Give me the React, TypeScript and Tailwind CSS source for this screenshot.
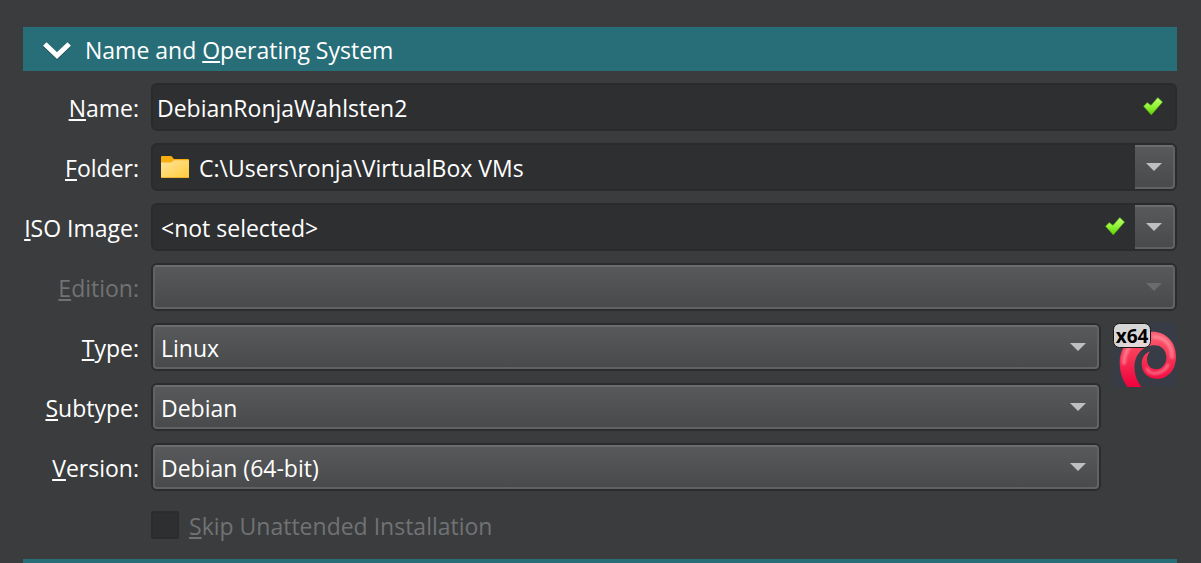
import { useId, type ReactNode } from 'react';

const rowGrid = 'grid grid-cols-[116px_minmax(0,1fr)] gap-x-3 items-center';
const raised =
  'rounded-sm border-2 border-[#616264] border-t-[#6b6c6e] bg-linear-to-b from-[#58595b] to-[#484a4b]';

function Mnemonic({ children }: { children: ReactNode }) {
  return <span className="underline decoration-2 underline-offset-2 [text-decoration-skip-ink:none]">{children}</span>;
}

function Label({ htmlFor, text, disabled }: { htmlFor: string; text: string; disabled?: boolean }) {
  return (
    <label
      htmlFor={htmlFor}
      className={'justify-self-end pt-0.5 whitespace-nowrap ' + (disabled ? 'text-[#717274]' : 'text-white')}
    >
      <Mnemonic>{text[0]}</Mnemonic>
      {text.slice(1)}
    </label>
  );
}

function Arrow({ dim }: { dim?: boolean }) {
  return (
    <svg viewBox="0 0 16 8" className="h-2 w-4" aria-hidden="true">
      <path d="M0 0H16L8 8Z" fill={dim ? '#6a6b6b' : '#bfbfbf'} />
    </svg>
  );
}

function Check() {
  const id = useId();
  return (
    <svg viewBox="0 0 20 20" className="size-5" aria-hidden="true">
      <defs>
        <linearGradient id={id} x1="0" y1="0" x2="0" y2="1">
          <stop offset="0" stopColor="#c0ff70" />
          <stop offset="0.5" stopColor="#92f43a" />
          <stop offset="1" stopColor="#5fd000" />
        </linearGradient>
      </defs>
      <path
        d="M0.5 9.300 4.200 5.500 8 8.300 14.800 0.500 19.600 5.100 8.300 18Z"
        fill={`url(#${id})`}
        stroke="#4c9a12"
        strokeWidth="0.6"
        strokeLinejoin="round"
      />
    </svg>
  );
}

function FolderIcon() {
  return (
    <svg viewBox="0 0 28 22" className="h-[22px] w-7" aria-hidden="true">
      <defs>
        <linearGradient id="folder-front" x1="0" y1="0" x2="1" y2="1">
          <stop offset="0" stopColor="#ffe59a" />
          <stop offset="1" stopColor="#ffc93c" />
        </linearGradient>
      </defs>
      <path d="M0 1Q0 0 1 0H9.5Q10.6 0 11.3 1L12.8 3H27Q28 3 28 4V12H0Z" fill="#f9ae10" />
      <path d="M0 6.5H9.5Q10.6 6.5 11.4 5.6L12.2 4.7Q12.7 4.2 13.6 4.2H28V21Q28 22 27 22H1Q0 22 0 21Z" fill="url(#folder-front)" />
      <path d="M0.4 21.6H27.6" stroke="#e3a91f" strokeWidth="0.8" />
    </svg>
  );
}

function DebianIcon() {
  return (
    <svg viewBox="0 0 64 64" className="size-16" role="img" aria-label="Debian x64">
      <defs>
        <linearGradient id="swirl" x1="0" y1="0" x2="0" y2="1">
          <stop offset="0" stopColor="#ff7080" />
          <stop offset="0.45" stopColor="#f93c59" />
          <stop offset="1" stopColor="#f0003c" />
        </linearGradient>
        <filter id="soft" x="-20%" y="-20%" width="140%" height="140%">
          <feGaussianBlur stdDeviation="1.3" />
        </filter>
        <clipPath id="swirl-shape">
          <path d="M14.500 64C9 56 6.600 48 6.700 39.500C7 22 20 8.700 39 8.700C53 8.700 63 19 63 33.500C63 47 55 55.800 44 55.800C35 55.800 28.700 49.500 28.700 41C28.700 35 31.300 30.700 37 28.300C34.800 31.500 33.700 34.500 34 37.500C34.500 43 38.500 46.300 43.500 46.200C49.500 46 53.500 40.500 53.400 34.500C53.200 27 48.500 22.300 41.500 22.300C30 22.300 21.500 32 21.500 44C21.500 51.500 24 58.500 28.500 64Z" />
        </clipPath>
      </defs>
      <rect width="64" height="64" fill="#383c46" />
      <g clipPath="url(#swirl-shape)">
        <rect width="64" height="64" fill="url(#swirl)" />
        <g fill="none" stroke="#ffb0ba" strokeLinecap="round" filter="url(#soft)">
          <path d="M41 14C53 14 59 23 59 34" strokeWidth="4" opacity="0.5" />
          <path d="M11 40C11 31 16 21 25 16" strokeWidth="4" opacity="0.5" />
          <path d="M34 46C36 50 41 51 45 50C49 49 53 46 55 42" strokeWidth="3" opacity="0.5" />
        </g>
      </g>
      <rect x="0.5" y="0.5" width="37" height="24" rx="6" fill="#e2e2e2" fillOpacity="0.93" stroke="#171717" />
      <text x="19" y="20" textAnchor="middle" fill="#000" className="font-['Open_Sans',sans-serif] text-[19px] font-bold">
        x64
      </text>
    </svg>
  );
}

type ComboProps = { id: string; value: string; disabled?: boolean };

function RaisedCombo({ id, value, disabled }: ComboProps) {
  return (
    <div className="grid h-12 rounded-md border-2 border-[#2b2c2d]">
      <select
        id={id}
        disabled={disabled}
        defaultValue={value}
        className={'col-start-1 row-start-1 h-full w-full appearance-none pt-0.5 pr-10 pl-1.5 text-white outline-none disabled:opacity-100 ' + raised}
      >
        <option className="bg-[#2e2f31]">{value}</option>
      </select>
      <span className="pointer-events-none col-start-1 row-start-1 mr-[13px] self-center justify-self-end">
        <Arrow dim={disabled} />
      </span>
    </div>
  );
}

function SunkenCombo({ id, value, icon, status }: ComboProps & { icon?: ReactNode; status?: ReactNode }) {
  return (
    <div className="grid h-12 rounded-md border-2 border-[#2a2b2c] bg-[#2e2f31]">
      <select
        id={id}
        defaultValue={value}
        className={
          'col-start-1 row-start-1 h-full w-full appearance-none bg-transparent pt-0.5 pr-20 text-white outline-none ' +
          (icon ? 'pl-[46px]' : 'pl-2')
        }
      >
        <option className="bg-[#2e2f31]">{value}</option>
      </select>
      <span className="pointer-events-none col-start-1 row-start-1 flex items-center">
        {icon && <span className="ml-2">{icon}</span>}
        <span className="mr-2.5 ml-auto">{status}</span>
        <span className={'flex h-full w-10 items-center justify-center rounded-l-none border-l-0 ' + raised}>
          <Arrow />
        </span>
      </span>
    </div>
  );
}

export default function App() {
  return (
    <main className="flex min-h-screen flex-col gap-3 bg-[#3b3c3e] pt-[27px] pr-6 pl-[23px] font-['Open_Sans','Segoe_UI',sans-serif] text-[23px] leading-8 text-white">
      <button type="button" aria-expanded="true" className="flex h-11 w-full items-center bg-[#286e78] pl-5 text-left">
        <svg viewBox="0 0 28 22" className="h-[22px] w-7" aria-hidden="true">
          <path d="M1.800 7 14 18.600 26.200 7" fill="none" stroke="#1b4a51" strokeWidth="4.800" />
          <path d="M1.800 6 14 17.500 26.200 6" fill="none" stroke="#fff" strokeWidth="5" />
        </svg>
        <span className="ml-3.5 pt-0.5">
          Name and <Mnemonic>O</Mnemonic>perating System
        </span>
      </button>

      <div className={rowGrid}>
        <Label htmlFor="name" text="Name:" />
        <div className="flex h-12 items-center rounded-md border-2 border-[#2a2b2c] bg-[#2e2f31] pr-3 pl-1">
          <input
            id="name"
            type="text"
            defaultValue="DebianRonjaWahlsten2"
            className="min-w-0 flex-1 bg-transparent pt-0.5 text-white outline-none"
          />
          <Check />
        </div>
      </div>

      <div className={rowGrid}>
        <Label htmlFor="folder" text="Folder:" />
        <SunkenCombo id="folder" value="C:\Users\ronja\VirtualBox VMs" icon={<FolderIcon />} />
      </div>

      <div className={rowGrid}>
        <Label htmlFor="iso" text="ISO Image:" />
        <SunkenCombo id="iso" value="<not selected>" status={<Check />} />
      </div>

      <div className={rowGrid}>
        <Label htmlFor="edition" text="Edition:" disabled />
        <RaisedCombo id="edition" value="" disabled />
      </div>

      <div className="flex items-start gap-3">
        <div className="flex min-w-0 flex-1 flex-col gap-3">
          <div className={rowGrid}>
            <Label htmlFor="type" text="Type:" />
            <RaisedCombo id="type" value="Linux" />
          </div>
          <div className={rowGrid}>
            <Label htmlFor="subtype" text="Subtype:" />
            <RaisedCombo id="subtype" value="Debian" />
          </div>
          <div className={rowGrid}>
            <Label htmlFor="version" text="Version:" />
            <RaisedCombo id="version" value="Debian (64-bit)" />
          </div>
        </div>
        <DebianIcon />
      </div>

      <div className={rowGrid}>
        <div className="col-start-2 flex h-11 items-center gap-2.5">
          <input
            id="skip"
            type="checkbox"
            disabled
            className="size-7 appearance-none rounded-xs border-2 border-[#2b2c2d] bg-[#2e2f31]"
          />
          <label htmlFor="skip" className="pt-0.5 text-[#717274]">
            <Mnemonic>S</Mnemonic>kip Unattended Installation
          </label>
        </div>
      </div>

      <div className="min-h-1 flex-1 bg-[#286e78]" />
    </main>
  );
}
